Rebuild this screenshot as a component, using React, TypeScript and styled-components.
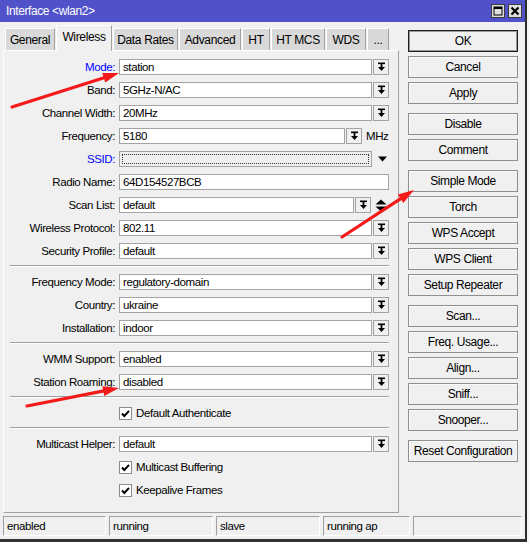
import React from 'react';
import styled, { createGlobalStyle } from 'styled-components';

const UI_FONT = `"Liberation Sans", Arial, sans-serif`;

const GlobalStyle = createGlobalStyle`
  html, body {
    margin: 0;
    padding: 0;
    background: #f0f0f0;
  }
  body {
    width: 529px;
    height: 542px;
    overflow: hidden;
    font-family: ${UI_FONT};
    font-size: 11.5px;
    letter-spacing: -0.4px;
    color: #000;
  }
  * {
    box-sizing: border-box;
  }
`;

type FieldKind = 'select' | 'text' | 'freq' | 'ssid' | 'scan';

type FormItem =
  | { label: string; value: string; kind: FieldKind; blue?: boolean }
  | { check: string };

const tabs = [
  { name: 'General', width: 50 },
  { name: 'Wireless', width: 56, active: true },
  { name: 'Data Rates', width: 65 },
  { name: 'Advanced', width: 62 },
  { name: 'HT', width: 28 },
  { name: 'HT MCS', width: 54 },
  { name: 'WDS', width: 40 },
  { name: '...', width: 22 },
];

const sections: FormItem[][] = [
  [
    { label: 'Mode:', value: 'station', kind: 'select', blue: true },
    { label: 'Band:', value: '5GHz-N/AC', kind: 'select' },
    { label: 'Channel Width:', value: '20MHz', kind: 'select' },
    { label: 'Frequency:', value: '5180', kind: 'freq' },
    { label: 'SSID:', value: '', kind: 'ssid', blue: true },
    { label: 'Radio Name:', value: '64D154527BCB', kind: 'text' },
    { label: 'Scan List:', value: 'default', kind: 'scan' },
    { label: 'Wireless Protocol:', value: '802.11', kind: 'select' },
    { label: 'Security Profile:', value: 'default', kind: 'select' },
  ],
  [
    { label: 'Frequency Mode:', value: 'regulatory-domain', kind: 'select' },
    { label: 'Country:', value: 'ukraine', kind: 'select' },
    { label: 'Installation:', value: 'indoor', kind: 'select' },
  ],
  [
    { label: 'WMM Support:', value: 'enabled', kind: 'select' },
    { label: 'Station Roaming:', value: 'disabled', kind: 'select' },
  ],
  [{ check: 'Default Authenticate' }],
  [
    { label: 'Multicast Helper:', value: 'default', kind: 'select' },
    { check: 'Multicast Buffering' },
    { check: 'Keepalive Frames' },
  ],
];

const fieldWidths: Record<FieldKind, number> = {
  select: 253,
  text: 270,
  freq: 226,
  ssid: 253,
  scan: 235,
};

const buttons = [
  { text: 'OK', primary: true },
  { text: 'Cancel' },
  { text: 'Apply' },
  { text: 'Disable', group: true },
  { text: 'Comment' },
  { text: 'Simple Mode', group: true },
  { text: 'Torch' },
  { text: 'WPS Accept' },
  { text: 'WPS Client' },
  { text: 'Setup Repeater' },
  { text: 'Scan...', group: true },
  { text: 'Freq. Usage...' },
  { text: 'Align...' },
  { text: 'Sniff...' },
  { text: 'Snooper...' },
  { text: 'Reset Configuration', group: true },
];

const statusCells = [
  { text: 'enabled', width: 103 },
  { text: 'running', width: 104 },
  { text: 'slave', width: 104 },
  { text: 'running ap', width: 87 },
  { text: '', width: 109 },
];

const arrows: { from: [number, number]; to: [number, number] }[] = [
  { from: [12, 107], to: [119, 73] },
  { from: [342, 237], to: [414, 190] },
  { from: [27, 406], to: [119, 388] },
];

// Icons
const DropIcon = () => (
  <svg width='9' height='10' viewBox='0 0 9 10'>
    <rect x='1' y='0.5' width='7' height='1.6' fill='#000' />
    <rect x='3.6' y='2' width='1.8' height='3' fill='#000' />
    <polygon points='1,5 8,5 4.5,9' fill='#000' />
  </svg>
);

const UpDownIcon = () => (
  <svg width='12' height='13' viewBox='0 0 12 13'>
    <polygon points='0.5,5.5 11.5,5.5 6,0.5' fill='#000' />
    <polygon points='0.5,7.5 11.5,7.5 6,12.5' fill='#000' />
  </svg>
);

const DownTriangle = () => (
  <svg width='9' height='6' viewBox='0 0 9 6'>
    <polygon points='0,0.5 9,0.5 4.5,5.5' fill='#000' />
  </svg>
);

const CheckMark = () => (
  <svg width='11' height='11' viewBox='0 0 11 11'>
    <path d='M2 5.5 L4.3 8 L9 2.8' stroke='#000' strokeWidth='2' fill='none' />
  </svg>
);

const MaximizeIcon = () => (
  <svg width='10' height='10' viewBox='0 0 10 10'>
    <rect x='1' y='1' width='8' height='8' fill='none' stroke='#000' strokeWidth='1' />
    <rect x='1' y='1' width='8' height='2' fill='#000' />
  </svg>
);

const CloseIcon = () => (
  <svg width='10' height='10' viewBox='0 0 10 10'>
    <path d='M1.5 1.5 L8.5 8.5 M8.5 1.5 L1.5 8.5' stroke='#000' strokeWidth='2.2' />
  </svg>
);

const RedArrow = ({ from, to }: { from: [number, number]; to: [number, number] }) => {
  const dx = to[0] - from[0];
  const dy = to[1] - from[1];
  const len = Math.hypot(dx, dy);
  const ux = dx / len;
  const uy = dy / len;
  const head = 16;
  const half = 5;
  const bx = to[0] - ux * head;
  const by = to[1] - uy * head;
  const points = [
    `${to[0]},${to[1]}`,
    `${bx - uy * half},${by + ux * half}`,
    `${bx + uy * half},${by - ux * half}`,
  ].join(' ');
  return (
    <g>
      <line
        x1={from[0]}
        y1={from[1]}
        x2={bx + ux * 2}
        y2={by + uy * 2}
        stroke='#f41a1a'
        strokeWidth={3.2}
        strokeLinecap='round'
      />
      <polygon points={points} fill='#f41a1a' />
    </g>
  );
};

const FormRow = ({ item }: { item: FormItem }) => {
  if ('check' in item) {
    return (
      <CheckRow>
        <CheckBox>
          <CheckMark />
        </CheckBox>
        <CheckLabel>{item.check}</CheckLabel>
      </CheckRow>
    );
  }
  const { label, value, kind, blue } = item;
  return (
    <Row>
      <Label $blue={blue}>{label}</Label>
      <Field $w={fieldWidths[kind]} $disabled={kind === 'ssid'}>
        {kind === 'ssid' ? <FocusRing /> : value}
      </Field>
      {kind !== 'text' && kind !== 'ssid' && (
        <DropButton>
          <DropIcon />
        </DropButton>
      )}
      {kind === 'freq' && <Unit>MHz</Unit>}
      {kind === 'scan' && (
        <SideIcon>
          <UpDownIcon />
        </SideIcon>
      )}
      {kind === 'ssid' && (
        <SideIcon $left={6}>
          <DownTriangle />
        </SideIcon>
      )}
    </Row>
  );
};

/**
 * @Render
 */
export default function App(): JSX.Element {
  return (
    <Page>
      <GlobalStyle />
      <Window>
        <TitleBar>
          <TitleText>Interface &lt;wlan2&gt;</TitleText>
          <TitleButtons>
            <TitleButton>
              <MaximizeIcon />
            </TitleButton>
            <TitleButton>
              <CloseIcon />
            </TitleButton>
          </TitleButtons>
        </TitleBar>
        <Main>
          <LeftColumn>
            <TabStrip>
              {tabs.map((tab) => (
                <Tab key={tab.name} $w={tab.width} $active={tab.active}>
                  {tab.name}
                </Tab>
              ))}
            </TabStrip>
            <Panel>
              {sections.map((section, index) => (
                <React.Fragment key={index}>
                  {index > 0 && <Separator />}
                  <Section>
                    {section.map((item, i) => (
                      <FormRow item={item} key={i} />
                    ))}
                  </Section>
                </React.Fragment>
              ))}
            </Panel>
          </LeftColumn>
          <ButtonColumn>
            {buttons.map((b) => (
              <ActionButton key={b.text} $primary={b.primary} $group={b.group}>
                {b.text}
              </ActionButton>
            ))}
          </ButtonColumn>
        </Main>
        <StatusBar>
          {statusCells.map((cell, i) => (
            <StatusCell key={i} $w={cell.width}>
              {cell.text}
            </StatusCell>
          ))}
        </StatusBar>
      </Window>
      <ArrowLayer width='529' height='542' viewBox='0 0 529 542'>
        {arrows.map((a, i) => (
          <RedArrow key={i} from={a.from} to={a.to} />
        ))}
      </ArrowLayer>
    </Page>
  );
}

const Page = styled.div`
  position: relative;
  width: 529px;
  height: 542px;
  background: #f4f4f4;
`;

const Window = styled.div`
  width: 527px;
  height: 542px;
  display: flex;
  flex-direction: column;
  background: #f0f0f0;
  border-right: 2px solid #2c2c2c;
  border-bottom: 3px solid #333;
`;

const TitleBar = styled.div`
  height: 22px;
  flex-shrink: 0;
  background: #5151c9;
  display: flex;
  align-items: center;
  justify-content: space-between;
  padding: 0 3px 0 6px;
`;

const TitleText = styled.span`
  color: #fff;
  font-size: 12px;
`;

const TitleButtons = styled.div`
  display: flex;
  gap: 3px;
`;

const TitleButton = styled.div`
  width: 14px;
  height: 14px;
  background: #dedede;
  border: 1px solid #3c3c3c;
  display: flex;
  align-items: center;
  justify-content: center;
`;

const Main = styled.div`
  flex: 1;
  display: flex;
  padding-top: 3px;
  min-height: 0;
`;

const LeftColumn = styled.div`
  width: 396px;
  margin-left: 3px;
  display: flex;
  flex-direction: column;
`;

const TabStrip = styled.div`
  height: 25px;
  display: flex;
  align-items: flex-end;
  gap: 1px;
  padding-left: 2px;
`;

const Tab = styled.div<{ $w: number; $active?: boolean }>`
  width: ${(p) => p.$w}px;
  height: ${(p) => (p.$active ? 26 : 22)}px;
  margin-bottom: ${(p) => (p.$active ? -1 : 0)}px;
  position: relative;
  z-index: ${(p) => (p.$active ? 1 : 0)};
  background: ${(p) => (p.$active ? '#f0f0f0' : '#d9d9d9')};
  border-top: 1px solid #fff;
  border-left: 1px solid #fff;
  border-right: 1px solid #a0a0a0;
  display: flex;
  align-items: center;
  justify-content: center;
  padding-bottom: ${(p) => (p.$active ? 3 : 0)}px;
  font-size: 12px;
  letter-spacing: -0.35px;
  white-space: nowrap;
`;

const Panel = styled.div`
  flex: 1;
  background: #f0f0f0;
  border-top: 1px solid #fff;
  border-left: 1px solid #fff;
  border-right: 1px solid #a0a0a0;
  border-bottom: 1px solid #a0a0a0;
  padding-top: 8px;
`;

const Section = styled.div`
  display: flex;
  flex-direction: column;
  gap: 7px;
`;

const Separator = styled.div`
  width: 379px;
  height: 2px;
  margin: 6px 0 7px 6px;
  border-top: 1px solid #a0a0a0;
  border-bottom: 1px solid #fff;
`;

const Row = styled.div`
  height: 16px;
  display: flex;
  align-items: center;
`;

const Label = styled.div<{ $blue?: boolean }>`
  width: 111px;
  margin-right: 4px;
  text-align: right;
  white-space: nowrap;
  color: ${(p) => (p.$blue ? '#0000ff' : '#000')};
`;

const Field = styled.div<{ $w: number; $disabled?: boolean }>`
  width: ${(p) => p.$w}px;
  height: 16px;
  border: 1px solid #a3a3a3;
  background: ${(p) => (p.$disabled ? '#efefef' : '#fff')};
  display: flex;
  align-items: center;
  padding: ${(p) => (p.$disabled ? '1px' : '0 3px')};
  white-space: nowrap;
  overflow: hidden;
`;

const FocusRing = styled.span`
  flex: 1;
  align-self: stretch;
  margin: 1px;
  border: 1px dotted #333;
`;

const DropButton = styled.div`
  width: 16px;
  height: 16px;
  margin-left: 1px;
  border: 1px solid #a3a3a3;
  background: #f0f0f0;
  display: flex;
  align-items: center;
  justify-content: center;
`;

const Unit = styled.span`
  margin-left: 4px;
`;

const SideIcon = styled.div<{ $left?: number }>`
  margin-left: ${(p) => p.$left ?? 4}px;
  display: flex;
  align-items: center;
`;

const CheckRow = styled.div`
  height: 16px;
  display: flex;
  align-items: center;
  padding-left: 115px;
`;

const CheckBox = styled.div`
  width: 13px;
  height: 13px;
  border: 1px solid #8c8c8c;
  background: #fff;
  display: flex;
  align-items: center;
  justify-content: center;
`;

const CheckLabel = styled.span`
  margin-left: 4px;
  white-space: nowrap;
`;

const ButtonColumn = styled.div`
  width: 110px;
  margin-left: 9px;
  padding-top: 5px;
  display: flex;
  flex-direction: column;
  gap: 4px;
`;

const ActionButton = styled.button<{ $primary?: boolean; $group?: boolean }>`
  width: 110px;
  height: 22px;
  flex-shrink: 0;
  margin: ${(p) => (p.$group ? '5px 0 0' : '0')};
  padding: 0;
  font-family: ${UI_FONT};
  font-size: 12px;
  letter-spacing: -0.4px;
  color: #000;
  background: #f0f0f0;
  border: 1px solid ${(p) => (p.$primary ? '#1c1c1c' : '#8f8f8f')};
  box-shadow: ${(p) => (p.$primary ? 'inset 0 0 0 1px #9a9a9a' : 'inset 1px 1px 0 #fafafa')};
  border-radius: 0;
  white-space: nowrap;
`;

const StatusBar = styled.div`
  height: 20px;
  flex-shrink: 0;
  margin: 3px 0 3px;
  padding-left: 3px;
  display: flex;
  gap: 3px;
`;

const StatusCell = styled.div<{ $w: number }>`
  width: ${(p) => p.$w}px;
  height: 20px;
  border-top: 1px solid #a0a0a0;
  border-left: 1px solid #a0a0a0;
  border-right: 1px solid #fff;
  border-bottom: 1px solid #fff;
  padding-left: 3px;
  display: flex;
  align-items: center;
  white-space: nowrap;
  overflow: hidden;
`;

const ArrowLayer = styled.svg`
  position: absolute;
  top: 0;
  left: 0;
  pointer-events: none;
`;
